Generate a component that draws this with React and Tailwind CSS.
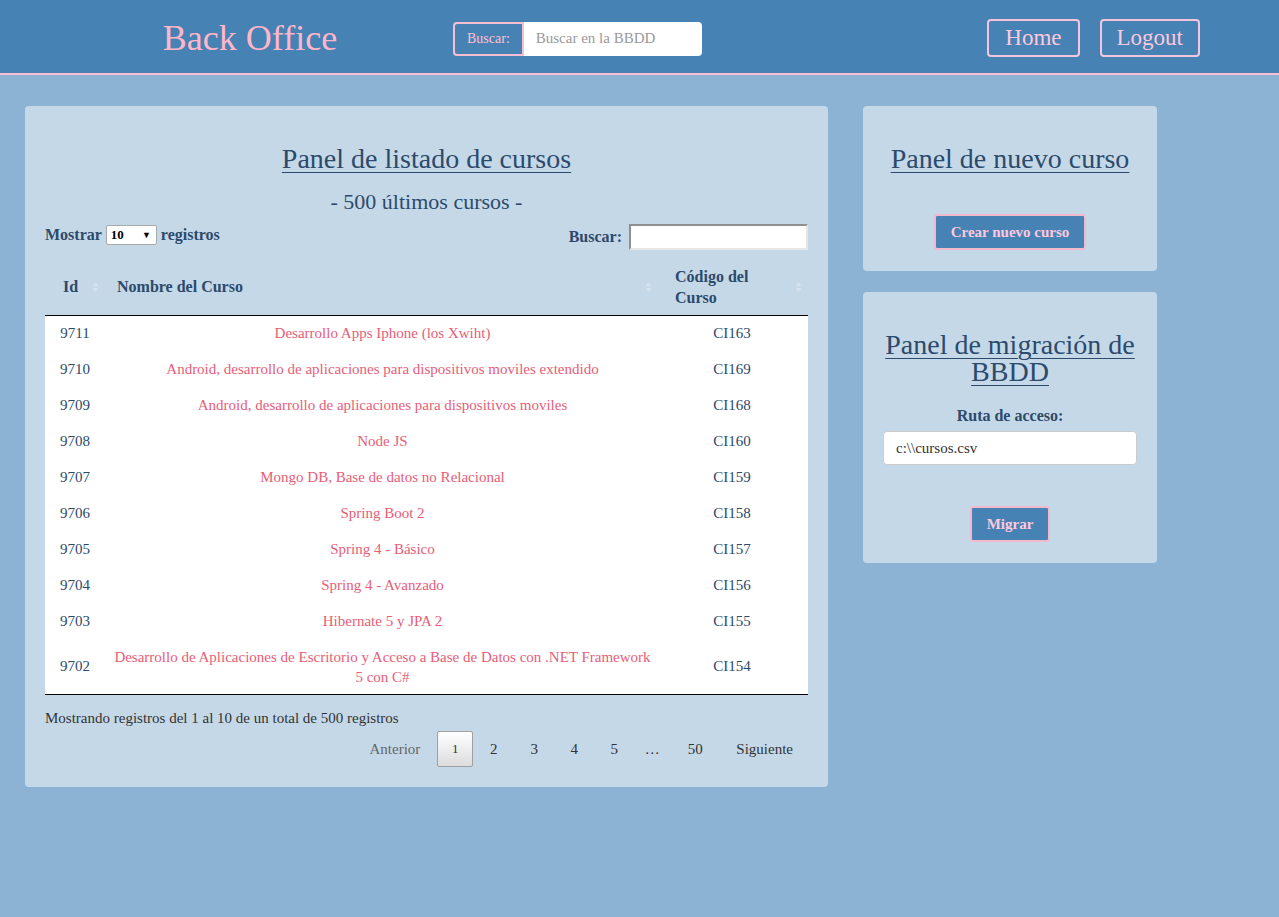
import React from 'react';

const cursos = [
  { id: 9711, nombre: 'Desarrollo Apps Iphone (los Xwiht)', codigo: 'CI163' },
  { id: 9710, nombre: 'Android, desarrollo de aplicaciones para dispositivos moviles extendido', codigo: 'CI169' },
  { id: 9709, nombre: 'Android, desarrollo de aplicaciones para dispositivos moviles', codigo: 'CI168' },
  { id: 9708, nombre: 'Node JS', codigo: 'CI160' },
  { id: 9707, nombre: 'Mongo DB, Base de datos no Relacional', codigo: 'CI159' },
  { id: 9706, nombre: 'Spring Boot 2', codigo: 'CI158' },
  { id: 9705, nombre: 'Spring 4 - Básico', codigo: 'CI157' },
  { id: 9704, nombre: 'Spring 4 - Avanzado', codigo: 'CI156' },
  { id: 9703, nombre: 'Hibernate 5 y JPA 2', codigo: 'CI155' },
  { id: 9702, nombre: 'Desarrollo de Aplicaciones de Escritorio y Acceso a Base de Datos con .NET Framework 5 con C#', codigo: 'CI154' },
];

const SortIcon = () => (
  <svg width="7" height="12" viewBox="0 0 7 12" className="shrink-0">
    <path d="M3.5 1 L6.5 5 L0.5 5 Z" fill="#d6e2ec" />
    <path d="M3.5 11 L6.5 7 L0.5 7 Z" fill="#d6e2ec" />
  </svg>
);

const Header = () => (
  <header className="h-[75px] bg-[#4682b4] border-b-2 border-[#f7c0d2] flex items-center">
    <div className="w-[500px] flex justify-center">
      <h1 className="text-[36px] text-[#ffb6c8] leading-none mt-[2px]">Back Office</h1>
    </div>
    <div className="flex items-stretch h-[34px] -ml-[47px] mt-[4px]">
      <span className="flex items-center px-[12px] bg-[#4682b4] border-2 border-[#f7c0d2] rounded-l-[4px] text-[14px] text-[#ffc0d0]">
        Buscar:
      </span>
      <input
        placeholder="Buscar en la BBDD"
        className="w-[178px] bg-white rounded-r-[4px] px-[12px] text-[15px] text-[#555] placeholder:text-[#999] outline-none"
      />
    </div>
    <nav className="ml-auto mr-[79px] flex gap-[20px] mt-[2px]">
      <button className="h-[38px] px-[16px] border-2 border-[#f2c6dd] rounded-[4px] text-[23px] text-[#ffc8dc] leading-none">Home</button>
      <button className="h-[38px] px-[15px] border-2 border-[#f2c6dd] rounded-[4px] text-[23px] text-[#ffc8dc] leading-none">Logout</button>
    </nav>
  </header>
);

const Listado = () => (
  <section className="w-[803px] bg-[#c5d8e8] rounded-[4px] px-[20px] pt-[37px] pb-[20px] text-[#2c4a6b]">
    <h2 className="text-center text-[28px] underline underline-offset-[4px] decoration-1 leading-[32px]">Panel de listado de cursos</h2>
    <p className="text-center text-[22px] mt-[14px] leading-[26px]">- 500 últimos cursos -</p>
    <div className="flex justify-between mt-[8px]">
      <label className="flex items-center gap-[4px] text-[16px] font-bold h-[20px] mt-[2px]">
        Mostrar
        <span className="relative inline-flex items-center w-[51px] h-[20px] bg-white border border-[#a9a9a9] rounded-[2px] text-[13px] font-bold text-black pl-[4px]">
          10
          <span className="absolute right-[5px] text-[9px] top-[3px]">▼</span>
        </span>
        registros
      </label>
      <label className="flex items-center gap-[7px] text-[16px] font-bold mt-[1px]">
        Buscar:
        <input className="w-[179px] h-[26px] bg-white border-2 border-t-[#8f8f8f] border-l-[#8f8f8f] border-r-[#e6e6e6] border-b-[#e6e6e6] outline-none" />
      </label>
    </div>
    <table className="w-full mt-[10px] border-collapse">
      <thead>
        <tr className="border-b border-black text-[16px] font-bold">
          <th className="w-[60px] h-[55px] pl-[18px] pr-[6px] text-left">
            <div className="flex items-center justify-between"><span>Id</span><SortIcon /></div>
          </th>
          <th className="pl-[12px] pr-[8px] text-left">
            <div className="flex items-center justify-between"><span>Nombre del Curso</span><SortIcon /></div>
          </th>
          <th className="w-[148px] pl-[15px] pr-[6px] text-left">
            <div className="flex items-center justify-between">
              <span className="leading-[21px]">Código del<br />Curso</span><SortIcon />
            </div>
          </th>
        </tr>
      </thead>
      <tbody className="bg-white text-[15px]">
        {cursos.map((c) => (
          <tr key={c.id}>
            <td className="h-[36px] text-center">{c.id}</td>
            <td className="text-center text-[#e95d77] leading-[20px] py-[7.5px] px-[4px]">{c.nombre}</td>
            <td className="text-center pr-[4px]">{c.codigo}</td>
          </tr>
        ))}
        <tr><td colSpan={3} className="border-b border-black p-0 h-0"></td></tr>
      </tbody>
    </table>
    <p className="text-[15px] text-[#333] mt-[14px] leading-[18px]">Mostrando registros del 1 al 10 de un total de 500 registros</p>
    <div className="flex justify-end items-center mt-[4px] text-[15px] text-[#333] pr-[15px]">
      <span className="pr-[17px] text-[#666]">Anterior</span>
      <span className="w-[36px] h-[36px] flex items-center justify-center border border-[#a0a0a0] rounded-[2px] bg-gradient-to-b from-white to-[#dcdcdc] text-[13px]">1</span>
      <span className="w-[41px] text-center">2</span>
      {['3', '4', '5'].map((n) => (
        <span key={n} className="w-[40px] text-center">{n}</span>
      ))}
      <span className="w-[36px] text-center">…</span>
      <span className="w-[50px] text-center">50</span>
      <span className="pl-[16px]">Siguiente</span>
    </div>
  </section>
);

const PanelBox = ({ children, className }) => (
  <section className={`w-[294px] bg-[#c5d8e8] rounded-[4px] text-[#2c4a6b] flex flex-col items-center ${className}`}>
    {children}
  </section>
);

const ActionButton = ({ children, className }) => (
  <button className={`h-[36px] bg-[#4682b4] border-2 border-[#f2b8cc] rounded-[3px] text-[15px] font-bold text-[#ffc8dc] px-[15px] ${className}`}>
    {children}
  </button>
);

export default function App() {
  return (
    <div className="min-h-[917px] bg-[#8db3d4] font-['Liberation_Serif',serif]">
      <Header />
      <main className="flex items-start gap-[35px] pl-[25px] pt-[31px]">
        <Listado />
        <div className="flex flex-col gap-[21px]">
          <PanelBox className="pt-[37px] pb-[21px]">
            <h2 className="text-[28px] underline underline-offset-[4px] decoration-1 leading-[32px]">Panel de nuevo curso</h2>
            <ActionButton className="mt-[39px]">Crear nuevo curso</ActionButton>
          </PanelBox>
          <PanelBox className="pt-[39px] pb-[21px]">
            <h2 className="text-[28px] underline underline-offset-[4px] decoration-1 leading-[27px] text-center px-[16px]">
              Panel de migración de BBDD
            </h2>
            <p className="text-[16px] font-bold mt-[19px]">Ruta de acceso:</p>
            <input
              defaultValue="c:\\cursos.csv"
              className="mt-[3px] w-[254px] h-[34px] bg-white border border-[#ccc] rounded-[4px] px-[12px] text-[15px] text-[#333] outline-none"
            />
            <ActionButton className="mt-[41px]">Migrar</ActionButton>
          </PanelBox>
        </div>
      </main>
    </div>
  );
}
